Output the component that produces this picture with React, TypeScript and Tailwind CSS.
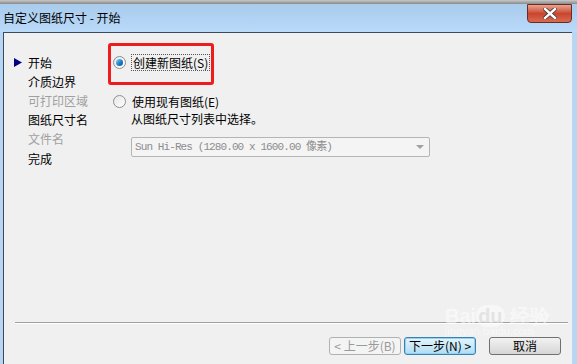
// App.tsx - "自定义图纸尺寸" wizard dialog (Win7 style)

const NAV = [
  { label: '开始', active: true, disabled: false },
  { label: '介质边界', active: false, disabled: false },
  { label: '可打印区域', active: false, disabled: true },
  { label: '图纸尺寸名', active: false, disabled: false },
  { label: '文件名', active: false, disabled: true },
  { label: '完成', active: false, disabled: false },
];

const FONT = "font-['Noto_Sans_CJK_SC','Noto_Sans',sans-serif]";

function Radio({ checked }: { checked?: boolean }) {
  return (
    <span className="flex h-[13px] w-[13px] shrink-0 items-center justify-center rounded-full border border-[#8f8f8f] bg-gradient-to-br from-[#e6e6e6] to-[#ffffff]">
      {checked && (
        <span className="h-[7px] w-[7px] rounded-full bg-gradient-to-br from-[#8fd3f5] via-[#1c8ad0] to-[#0d4f8c]" />
      )}
    </span>
  );
}

export default function App() {
  return (
    <div className={`relative flex h-[364px] w-[577px] flex-col overflow-hidden bg-[#b7d6f4] ${FONT}`}>
      {/* title bar */}
      <div className="h-[4px] bg-gradient-to-b from-[#c8c8c8] to-[#8a8a8a]" />
      <div className="relative flex h-[28px] items-center bg-gradient-to-b from-[#a9cbec] to-[#b9daf9] pl-[3px]">
        <span className="text-[12px] leading-none text-black">自定义图纸尺寸 - 开始</span>
        <button className="absolute right-[5px] top-0 flex h-[19px] w-[45px] items-center justify-center rounded-b-[4px] border border-[#6b2a22] bg-gradient-to-b from-[#e8a493] via-[#c9452e] to-[#d86a4f]">
          <svg width="14" height="11" viewBox="0 0 14 11">
            <path d="M2 1 L12 10 M12 1 L2 10" stroke="#3d3d3d" strokeWidth="4" strokeLinecap="square" />
            <path d="M2 1 L12 10 M12 1 L2 10" stroke="#ffffff" strokeWidth="2.4" strokeLinecap="square" />
          </svg>
        </button>
      </div>

      {/* client area */}
      <div className="ml-[3px] mr-[5px] flex flex-1 flex-col border-l border-t border-[#3c4a5c] bg-[#f0f0f0]">
        <div className="flex flex-1 pt-[20px] text-[12px]">
          {/* left steps */}
          <div className="w-[104px] pl-[10px]">
            {NAV.map(n => (
              <div key={n.label} className="flex h-[19.2px] items-center">
                <span className="w-[14px]">
                  {n.active && (
                    <svg width="8" height="9" viewBox="0 0 8 9">
                      <path d="M0 0 L8 4.5 L0 9 Z" fill="#000080" />
                    </svg>
                  )}
                </span>
                <span className={n.disabled ? 'text-[#a0a0a0]' : 'text-black'}>{n.label}</span>
              </div>
            ))}
          </div>

          {/* options */}
          <div className="relative flex flex-col">
            <div className="pointer-events-none absolute left-[0px] top-[-10px] h-[42px] w-[106px] rounded-[3px] border-[3px] border-[#ee1c1c]" />
            <div className="flex h-[19px] items-center pl-[5px]">
              <Radio checked />
              <span className="ml-[5px] border border-dotted border-[#555] px-[1px] leading-[15px] text-black">创建新图纸(S)</span>
            </div>
            <div className="mt-[21px] flex h-[17px] items-center pl-[5px]">
              <Radio />
              <span className="ml-[6px] text-black">使用现有图纸(E)</span>
            </div>
            <div className="flex h-[17px] items-center pl-[23px] text-black">从图纸尺寸列表中选择。</div>
            <div className="ml-[23px] mt-[10px] flex h-[20px] w-[299px] items-center justify-between rounded-[2px] border border-[#b5b5b5] bg-[#f4f4f4] pl-[3px] pr-[5px]">
              <span className="font-['Liberation_Mono','Noto_Sans_CJK_SC',monospace] text-[11px] tracking-[-0.9px] text-[#8d8d8d]">
                Sun Hi-Res (1280.00 x 1600.00 像素)
              </span>
              <svg width="8" height="4" viewBox="0 0 8 4">
                <path d="M0 0 L8 0 L4 4 Z" fill="#a0a0a0" />
              </svg>
            </div>
          </div>
        </div>

        {/* separator */}
        <div className="ml-[11px] mr-[4px] border-b border-t border-b-white border-t-[#a0a0a0]" />

        {/* buttons */}
        <div className="flex justify-end gap-[3px] pb-[9px] pr-[11px] pt-[13px] text-[12px]">
          <button className="flex h-[18px] w-[72px] items-center justify-center rounded-[3px] border border-[#adb2b5] bg-[#f4f4f4] text-[#9a9a9a]">
            &lt; 上一步(B)
          </button>
          <button className="flex h-[18px] w-[72px] items-center justify-center rounded-[3px] border border-[#3c7fb1] bg-gradient-to-b from-[#e5f4fc] to-[#b0dcf3] text-black shadow-[inset_0_0_0_1px_#8fd4f5]">
            下一步(N) &gt;
          </button>
          <button className="ml-[10px] flex h-[18px] w-[72px] items-center justify-center rounded-[3px] border border-[#707070] bg-gradient-to-b from-[#f2f2f2] to-[#d6d6d6] text-black">
            取消
          </button>
        </div>
      </div>

      {/* watermark */}
      <div className="pointer-events-none absolute left-[445px] top-[306px] flex flex-col items-start text-white opacity-50">
        <span className="font-['Liberation_Sans',sans-serif] text-[20px] font-bold leading-none">Bai<span className="rounded-full bg-white px-[2px] text-[#d8d8d8]">du</span> 经验</span>
        <span className="font-['Liberation_Sans',sans-serif] text-[11px] leading-none">jingyan.baidu.com</span>
      </div>
    </div>
  );
}
